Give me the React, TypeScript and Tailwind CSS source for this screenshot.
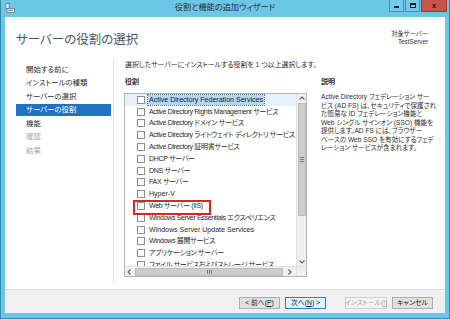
import React from "react";

const roles = [
  "Active Directory Federation Services",
  "Active Directory Rights Management サービス",
  "Active Directory ドメイン サービス",
  "Active Directory ライトウェイト ディレクトリ サービス",
  "Active Directory 証明書サービス",
  "DHCP サーバー",
  "DNS サーバー",
  "FAX サーバー",
  "Hyper-V",
  "Web サーバー (IIS)",
  "Windows Server Essentials エクスペリエンス",
  "Windows Server Update Services",
  "Windows 展開サービス",
  "アプリケーション サーバー",
  "ファイル サービスおよびストレージ サービス",
];

const nav: { t: string; s: "n" | "sel" | "d" }[] = [
  { t: "開始する前に", s: "n" },
  { t: "インストールの種類", s: "n" },
  { t: "サーバーの選択", s: "n" },
  { t: "サーバーの役割", s: "sel" },
  { t: "機能", s: "n" },
  { t: "確認", s: "d" },
  { t: "結果", s: "d" },
];

const desc = [
  "Active Directory フェデレーション サー",
  "ビス (AD FS) は、セキュリティで保護され",
  "た簡易な ID フェデレーション機能と",
  "Web シングル サインオン (SSO) 機能を",
  "提供します。AD FS には、ブラウザー",
  "ベースの Web SSO を有効にするフェデ",
  "レーション サービスが含まれます。",
];

function Chevron({ dir }: { dir: "up" | "down" | "left" | "right" }) {
  const d =
    dir === "up"
      ? "M1.5 4.5 L4 2 L6.5 4.5"
      : dir === "down"
      ? "M1.5 2.5 L4 5 L6.5 2.5"
      : dir === "left"
      ? "M4.5 1.5 L2 4 L4.5 6.5"
      : "M2.5 1.5 L5 4 L2.5 6.5";
  return (
    <svg width="8" height="8" viewBox="0 0 8 8">
      <path d={d} fill="none" stroke="#606060" strokeWidth="1.1" />
    </svg>
  );
}

function Btn({
  children,
  kind,
  w,
}: {
  children: React.ReactNode;
  kind?: "default" | "disabled";
  w: string;
}) {
  const base =
    "h-[12px] flex items-center justify-center text-[6.8px] leading-none border whitespace-nowrap";
  const cls =
    kind === "default"
      ? "border-[#3c7fb1] bg-[#e5f1fb] text-[#222]"
      : kind === "disabled"
      ? "border-[#cfcfcf] bg-[#f4f4f4] text-[#a6a6a6]"
      : "border-[#adadad] bg-[#e1e1e1] text-[#222]";
  return <div className={`${base} ${cls} ${w}`}>{children}</div>;
}

const hasCjk = (s: string) => /[^\x00-\x7F]/.test(s);

export default function App() {
  return (
    <div className="w-[450px] h-[319px] overflow-hidden bg-[#6cc7e7] border-x border-b border-[#3389ae] flex flex-col font-['Liberation_Sans','Noto_Sans_CJK_JP',sans-serif] [font-feature-settings:'palt'] text-[#262626]">
      {/* title bar */}
      <div className="h-[17px] grid grid-cols-[1fr_auto_1fr] items-start">
        <div className="pl-[4px] pt-[3px]">
          <svg width="10" height="10" viewBox="0 0 10 10">
            <rect x="1" y="0.5" width="3" height="5" fill="#f4f4f4" stroke="#5a6b78" strokeWidth="0.7" />
            <rect x="2" y="5.5" width="7.5" height="4" fill="#e8eef2" stroke="#5a6b78" strokeWidth="0.7" />
            <rect x="3" y="6.8" width="5" height="1.2" fill="#7d8f9c" />
          </svg>
        </div>
        <div className="pt-[3px] text-[8.2px] leading-[10px] text-[#2b2b2b] whitespace-nowrap">
          役割と機能の追加ウィザード
        </div>
        <div className="flex justify-end pr-[2px] gap-[1px]">
          <div className="w-[15px] h-[12px] bg-[#72cbea] border border-[#3d93b8] border-t-0 flex items-end justify-center pb-[3px]">
            <div className="w-[5px] h-[2px] bg-[#1b1b1b]" />
          </div>
          <div className="w-[15px] h-[12px] bg-[#72cbea] border border-[#3d93b8] border-t-0 flex items-center justify-center">
            <div className="w-[6px] h-[5px] border border-[#1b1b1b] border-t-2" />
          </div>
          <div className="w-[26px] h-[12px] bg-[#c9524c] border border-[#9c3b36] border-t-0 flex items-center justify-center text-[7px] font-bold text-[#2a0d0d] leading-none">
            x
          </div>
        </div>
      </div>

      {/* client */}
      <div className="mx-[4px] mb-[5px] flex-1 flex flex-col bg-white">
        <div className="h-[272px] flex flex-col">
          {/* header */}
          <div className="h-[43px] flex justify-between items-start pl-[11px] pr-[17px]">
            <div className="pt-[15px] text-[12.5px] leading-[16px] text-[#435669] whitespace-nowrap">
              サーバーの役割の選択
            </div>
            <div className="pt-[13px] text-right text-[6.3px] leading-[8px] text-[#333]">
              <div>対象サーバー</div>
              <div>TestServer</div>
            </div>
          </div>

          {/* body */}
          <div className="flex flex-1">
            {/* nav */}
            <div className="w-[108px] pl-[11px] pt-[3px]">
              {nav.map((n) => (
                <div key={n.t} className="h-[13.45px] flex items-center">
                  <div
                    className={`w-[95px] h-[12px] flex items-center pl-[10px] text-[7.4px] leading-none whitespace-nowrap ${
                      n.s === "sel"
                        ? "bg-[#2272c2] text-white"
                        : n.s === "d"
                        ? "text-[#a9a9a9]"
                        : "text-[#2e2e2e]"
                    }`}
                  >
                    {n.t}
                  </div>
                </div>
              ))}
            </div>
            {/* divider */}
            <div className="w-px h-[223px] bg-[#e2e2e2]" />

            {/* main */}
            <div className="w-[193px] pl-[10px] flex flex-col">
              <div className="pl-[1px] h-[10px] text-[6.9px] leading-[10px] whitespace-nowrap text-[#2e2e2e]">
                選択したサーバーにインストールする役割を 1 つ以上選択します。
              </div>
              <div className="pl-[1px] mt-[7px] h-[10px] text-[7px] leading-[10px] font-bold text-[#2e2e2e]">
                役割
              </div>
              <div className="mt-[6px] w-[183px] h-[184px] border border-[#b4b4b4] flex flex-col">
                <div className="flex h-[172px]">
                  {/* list */}
                  <div className="relative w-[172px] h-[172px] overflow-hidden">
                    {roles.map((r, i) => (
                      <div
                        key={r}
                        className={`h-[11.8px] flex items-center pl-[12px] ${
                          i === 0 ? "bg-[#e6f1fb]" : ""
                        }`}
                      >
                        <div className="w-[8px] h-[8px] border border-[#8f8f8f] bg-white shrink-0" />
                        <div
                          className={`ml-[3px] text-[7.05px] leading-[10px] whitespace-nowrap ${
                            hasCjk(r) ? "tracking-[-0.35px]" : "tracking-normal"
                          } ${
                            i === 0
                              ? "bg-[#b5d6f3] outline outline-1 outline-dotted outline-[#4d7fae] px-[1px] text-[#1a1a1a]"
                              : "px-[1px] text-[#2a2a2a]"
                          }`}
                        >
                          {r}
                        </div>
                      </div>
                    ))}
                    <div className="absolute left-[8px] top-[106px] w-[78px] h-[15px] border-2 border-[#d5262d]" />
                  </div>
                  {/* vertical scrollbar */}
                  <div className="w-[10px] h-[172px] bg-[#f0f0f0] border-l border-[#e2e2e2] flex flex-col items-center">
                    <div className="h-[9px] w-full flex items-center justify-center">
                      <Chevron dir="up" />
                    </div>
                    <div className="w-[8px] h-[113px] bg-[#cdcdcd] border border-[#bdbdbd] flex flex-col items-center justify-center gap-[1px]">
                      <div className="w-[4px] h-px bg-[#777]" />
                      <div className="w-[4px] h-px bg-[#777]" />
                      <div className="w-[4px] h-px bg-[#777]" />
                    </div>
                    <div className="flex-1" />
                    <div className="h-[9px] w-full flex items-center justify-center">
                      <Chevron dir="down" />
                    </div>
                  </div>
                </div>
                {/* horizontal scrollbar */}
                <div className="flex h-[10px] border-t border-[#e2e2e2]">
                  <div className="w-[172px] bg-[#f0f0f0] flex items-center">
                    <div className="w-[9px] flex items-center justify-center">
                      <Chevron dir="left" />
                    </div>
                    <div className="ml-[1px] w-[148px] h-[8px] bg-[#cdcdcd] border border-[#bdbdbd] flex items-center justify-center gap-[1px]">
                      <div className="w-px h-[4px] bg-[#777]" />
                      <div className="w-px h-[4px] bg-[#777]" />
                      <div className="w-px h-[4px] bg-[#777]" />
                    </div>
                    <div className="flex-1 flex items-center justify-center">
                      <Chevron dir="right" />
                    </div>
                  </div>
                  <div className="w-[10px] bg-[#f0f0f0] border-l border-[#e2e2e2]" />
                </div>
              </div>
            </div>

            {/* description */}
            <div className="ml-[14px] pt-[17px]">
              <div className="h-[10px] text-[7px] leading-[10px] font-bold text-[#2e2e2e]">
                説明
              </div>
              <div className="mt-[6px] text-[6.6px] leading-[8.5px] text-[#2e2e2e]">
                {desc.map((l) => (
                  <div key={l} className="whitespace-nowrap">
                    {l}
                  </div>
                ))}
              </div>
            </div>
          </div>
        </div>

        {/* footer */}
        <div className="h-[24px] bg-[#f0f0f0] border-t border-[#dedede] flex justify-end items-start pt-[7px] pr-[12px]">
          <Btn w="w-[41px]">
            &lt; 前へ(<u>P</u>)
          </Btn>
          <div className="w-[5px]" />
          <Btn w="w-[41px]" kind="default">
            次へ(<u>N</u>) &gt;
          </Btn>
          <div className="w-[19px]" />
          <Btn w="w-[42px]" kind="disabled">
            インストール(<u>I</u>)
          </Btn>
          <div className="w-[5px]" />
          <Btn w="w-[41px]">キャンセル</Btn>
        </div>
      </div>
    </div>
  );
}
